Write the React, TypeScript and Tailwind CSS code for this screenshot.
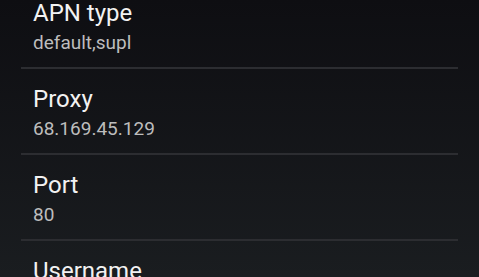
import React from 'react';

const items = [
  { title: 'APN type', value: 'default,supl' },
  { title: 'Proxy', value: '68.169.45.129' },
  { title: 'Port', value: '80' },
  { title: 'Username', value: 'Not set' },
];

export default function App() {
  return (
    <div
      className="h-[277px] w-[479px] overflow-hidden bg-gradient-to-b from-[#0e0e12] to-[#1a1d20]"
      style={{ fontFamily: 'Roboto, "Noto Sans", sans-serif' }}
    >
      <div className="-mt-[17px] mx-[21px]">
        {items.map((item, i) => (
          <div key={item.title}>
            {i > 0 && <div className="h-[2px] bg-[#2c2d31]" />}
            <div className="h-[84px] pl-[12px] pt-[16px]">
              <div className="text-[24px] leading-[28px] text-[#f2f2f2]">{item.title}</div>
              <div className="mt-[4px] text-[19px] leading-[24px] text-[#bdbdbd]">{item.value}</div>
            </div>
          </div>
        ))}
      </div>
    </div>
  );
}
